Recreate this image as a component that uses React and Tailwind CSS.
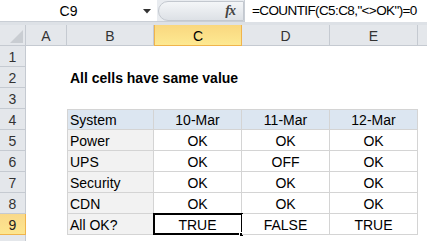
import React from "react";

// Spreadsheet snapshot: formula bar, column/row headers and a small status table.

const COLS = [
  { id: "A", w: "w-[41px]" },
  { id: "B", w: "w-[87px]" },
  { id: "C", w: "w-[88px]" },
  { id: "D", w: "w-[88px]" },
  { id: "E", w: "w-[88px]" },
];

const TABLE = [
  ["System", "10-Mar", "11-Mar", "12-Mar"],
  ["Power", "OK", "OK", "OK"],
  ["UPS", "OK", "OFF", "OK"],
  ["Security", "OK", "OK", "OK"],
  ["CDN", "OK", "OK", "OK"],
  ["All OK?", "TRUE", "FALSE", "TRUE"],
];

const RowHead = ({ n, active }) => (
  <div
    className={`w-[26px] h-[21px] shrink-0 flex items-center justify-center text-[14px] pt-[1px] border-r border-b ${
      active
        ? "bg-gradient-to-b from-[#f9d98a] to-[#fde68f] border-[#f0b44c] text-[#222]"
        : "bg-[#e4e7eb] border-[#c5cad1] text-[#333]"
    }`}
  >
    {n}
  </div>
);

function TableRow({ r, cells }) {
  const head = r === 0;
  const last = r === TABLE.length - 1;
  return (
    <>
      {cells.map((c, i) => {
        const sel = last && i === 1;
        const bg = head ? "bg-[#dce6f1]" : i === 0 ? "bg-[#f2f2f2]" : "bg-white";
        return (
          <div
            key={i}
            className={`relative h-[21px] shrink-0 flex items-center pt-[1px] border-r border-b border-[#d4d4d4] ${
              COLS[i + 1].w
            } ${bg} ${i === 0 ? "justify-start pl-[2px]" : "justify-center"} ${
              head ? "border-t" : ""
            } ${i === 0 ? "border-l" : ""}`}
          >
            {sel && (
              <>
                <div className="absolute -left-[1px] -top-[1px] w-[90px] h-[22px] border-2 border-black" />
                <div className="absolute -right-[3px] -bottom-[3px] w-[5px] h-[5px] bg-black border border-white" />
              </>
            )}
            <span className="relative">{c}</span>
          </div>
        );
      })}
    </>
  );
}

export default function App() {
  return (
    <div
      className="w-[427px] h-[241px] overflow-hidden bg-white text-black text-[14px] leading-none"
      style={{ fontFamily: '"Liberation Sans", Arial, sans-serif' }}
    >
      {/* Formula bar */}
      <div className="flex h-[22px] bg-[#e9ecf0] border-b border-[#c9ced5]">
        <div className="relative w-[157px] shrink-0 bg-white flex items-center justify-center">
          <span className="-ml-[20px]">C9</span>
          <svg className="absolute left-[143px] top-[9px]" width="8" height="5" viewBox="0 0 8 5">
            <path d="M0 0h8L4 4.5z" fill="#333" />
          </svg>
        </div>
        <div className="flex-1 flex items-center">
          <div className="w-[86px] h-[20px] ml-[1px] rounded-l-full bg-gradient-to-b from-[#f4f6f8] to-[#dde1e6] border border-[#c3c8cf] flex items-center justify-end pr-[8px]">
            <span
              className="italic font-bold text-[#444] text-[14px] tracking-[-1px]"
              style={{ fontFamily: '"Liberation Serif", serif' }}
            >
              fx
            </span>
          </div>
          <div className="flex-1 min-w-0 h-[22px] bg-white border-l border-[#c9ced5] flex items-center pl-[7px] whitespace-nowrap text-[13.5px] tracking-[-0.6px]">
            =COUNTIF(C5:C8,"&lt;&gt;OK")=0
          </div>
        </div>
      </div>
      <div className="h-[3px] bg-[#dde1e6]" />

      {/* Column headers */}
      <div className="flex h-[21px]">
        <div className="relative w-[26px] shrink-0 bg-[#e4e7eb] border-r border-b border-[#c5cad1]">
          <svg className="absolute right-[2px] bottom-[2px]" width="13" height="13" viewBox="0 0 13 13">
            <path d="M13 0V13H0z" fill="#c9cdd2" />
          </svg>
        </div>
        {COLS.map((c) => (
          <div
            key={c.id}
            className={`${c.w} shrink-0 flex items-center justify-center pt-[1px] border-r border-b ${
              c.id === "C"
                ? "bg-gradient-to-b from-[#f9d77f] to-[#fde992] border-[#f0b44c] border-l"
                : "bg-[#e4e7eb] border-[#c5cad1] text-[#333]"
            }`}
          >
            {c.id}
          </div>
        ))}
        <div className="flex-1 bg-[#e4e7eb] border-b border-[#c5cad1]" />
      </div>

      {/* Rows 1-3 */}
      {[1, 2, 3].map((n) => (
        <div key={n} className="flex">
          <RowHead n={n} />
          {n === 2 && (
            <div className="pl-[44px] pt-[1px] flex items-center font-bold whitespace-nowrap">
              All cells have same value
            </div>
          )}
        </div>
      ))}

      {/* Table rows 4-9 */}
      {TABLE.map((cells, r) => (
        <div key={r} className="flex">
          <RowHead n={r + 4} active={r === 5} />
          <div className="w-[41px] shrink-0" />
          <TableRow r={r} cells={cells} />
        </div>
      ))}
      {/* Row 10: only its top edge is in view */}
      <div className="flex">
        <RowHead n="" />
      </div>
    </div>
  );
}
